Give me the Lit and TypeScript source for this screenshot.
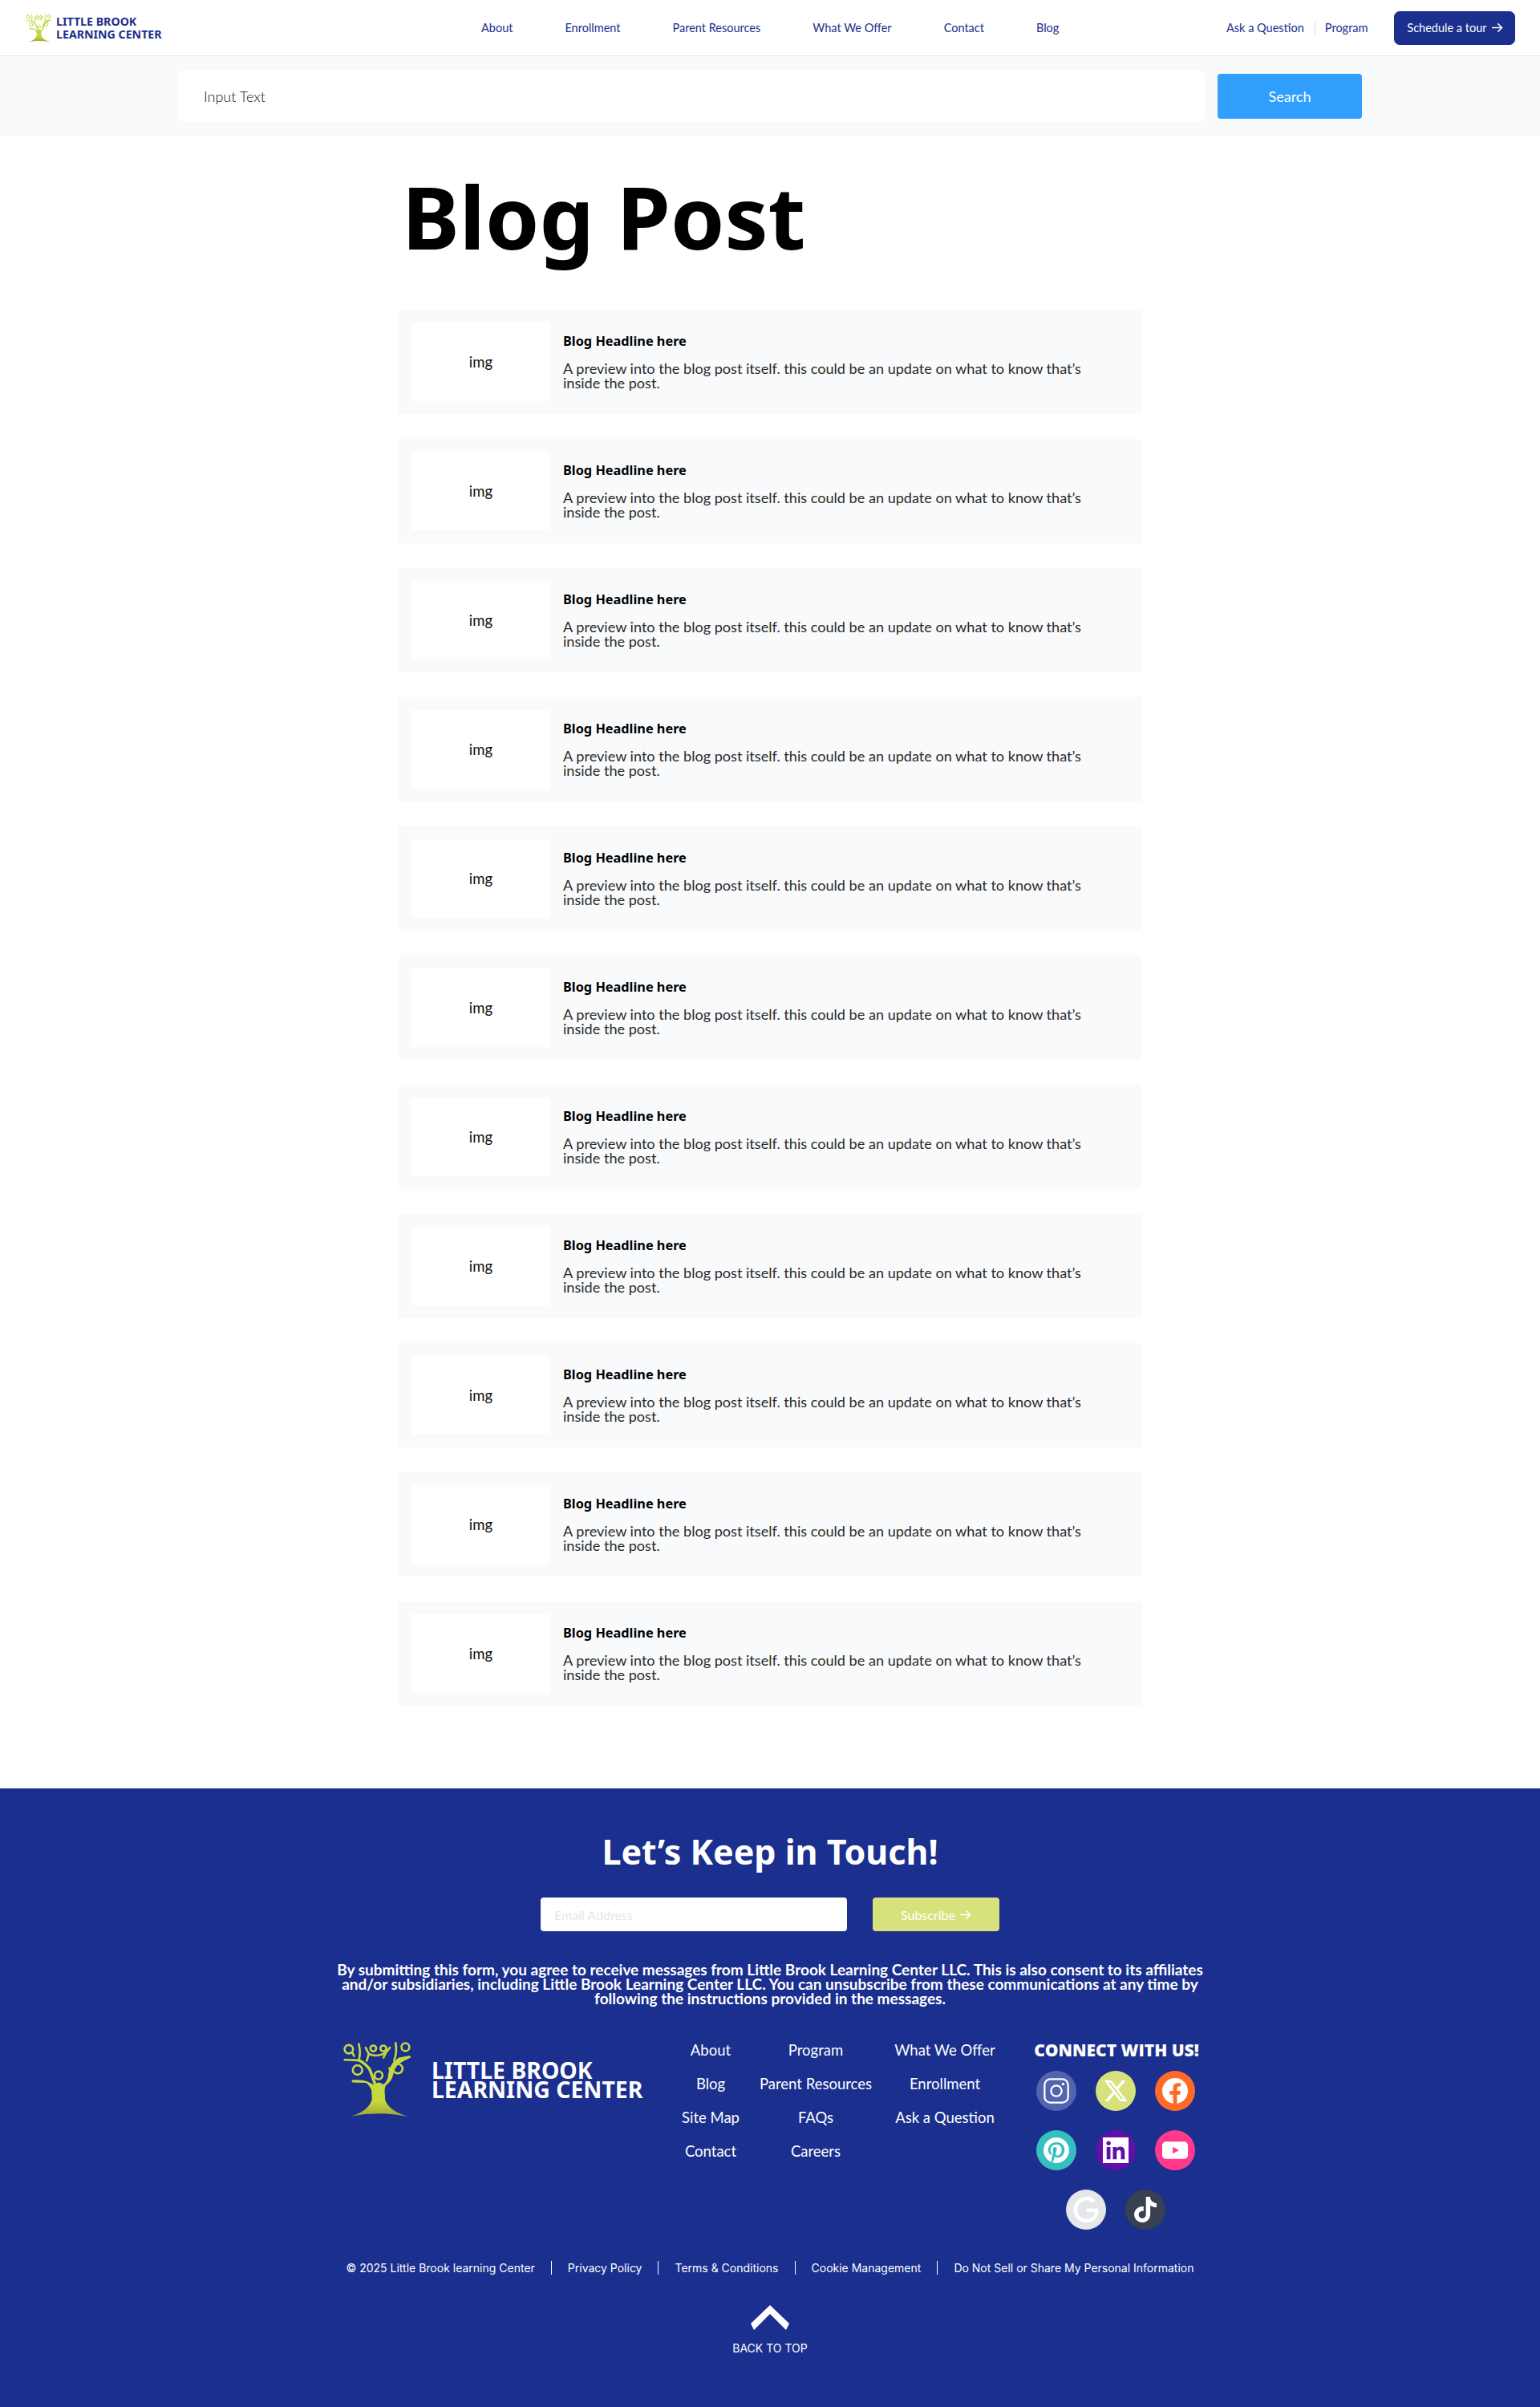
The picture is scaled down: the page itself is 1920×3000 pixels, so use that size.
import { LitElement, html, css, svg } from "lit";
import { customElement } from "lit/decorators.js";

const tree = () => html`<svg class="tree" viewBox="48 46 262 292" aria-hidden="true">
  <defs><linearGradient id="tg" x1="0" y1="0" x2="0" y2="1"><stop offset="0.75" stop-color="#c4d93e"/><stop offset="1" stop-color="#a3a336"/></linearGradient></defs>
  <path fill="url(#tg)" d="M82 332Q148 312 160 268L158 232Q150 216 138 206L86 204 82 195Q128 192 150 204L170 214Q178 204 185 204Q194 204 204 212Q222 196 222 172Q226 148 240 128L262 110 304 102 308 110Q280 122 262 134Q244 150 240 176Q236 198 212 216L208 232L210 270Q222 312 298 334Q190 312 82 332Z"/>
  <g fill="none" stroke="#c4d93e" stroke-linecap="round" stroke-linejoin="round">
    <g stroke-width="11">
      <path d="M172 212Q160 175 150 152Q130 128 110 120"/>
    </g>
    <g stroke-width="8">
      <path d="M110 120L56 118"/>
      <path d="M110 122Q118 90 110 58"/>
      <path d="M92 104L86 92"/>
      <path d="M140 122L148 96Q180 110 212 92L228 72"/>
      <path d="M148 96L136 72"/>
      <path d="M212 92L204 110"/>
      <path d="M244 122Q256 90 250 54"/>
      <path d="M232 168L226 150"/>
    </g>
    <g stroke-width="8">
      <circle cx="72" cy="78" r="16"/><circle cx="165" cy="75" r="11"/><circle cx="203" cy="75" r="11"/>
      <circle cx="287" cy="70" r="15"/><circle cx="105" cy="157" r="18"/><circle cx="258" cy="152" r="18"/>
      <circle cx="185" cy="177" r="15"/>
    </g>
  </g>
</svg>`;

const arrow = () => html`<svg class="arrow" viewBox="0 0 16 14" aria-hidden="true"><path d="M1 7H14.5M9 1.5L14.5 7L9 12.5" fill="none" stroke="currentColor" stroke-width="1.6"/></svg>`;

const socials = [
  { c: "#5364ae", i: svg`<rect x="1" y="1" width="22" height="22" rx="5.4" fill="none" stroke="#fff" stroke-width="1.7"/><circle cx="12" cy="12" r="5" fill="none" stroke="#fff" stroke-width="1.7"/><circle cx="18.3" cy="5.7" r="1.3" fill="#fff"/>` },
  { c: "#d8e27d", i: svg`<path fill="#fff" d="M18.244 2.25h3.308l-7.227 8.26 8.502 11.24H16.17l-5.214-6.817L4.99 21.75H1.68l7.73-8.835L1.254 2.25H8.08l4.713 6.231zm-1.161 17.52h1.833L7.084 4.126H5.117z"/>` },
  { c: "#ff6b26", i: svg`<path fill="#fff" d="M24 12.073c0-6.627-5.373-12-12-12s-12 5.373-12 12c0 5.99 4.388 10.954 10.125 11.854v-8.385H7.078v-3.47h3.047V9.43c0-3.007 1.792-4.669 4.533-4.669 1.312 0 2.686.235 2.686.235v2.953H15.83c-1.491 0-1.956.925-1.956 1.874v2.25h3.328l-.532 3.47h-2.796v8.385C19.612 23.027 24 18.062 24 12.073z"/>` },
  { c: "#36bfbf", i: svg`<path fill="#fff" d="M12.017 0C5.396 0 .029 5.367.029 11.987c0 5.079 3.158 9.417 7.618 11.162-.105-.949-.199-2.403.041-3.439.219-.937 1.406-5.957 1.406-5.957s-.359-.72-.359-1.781c0-1.663.967-2.911 2.168-2.911 1.024 0 1.518.769 1.518 1.688 0 1.029-.653 2.567-.992 3.992-.285 1.193.6 2.165 1.775 2.165 2.128 0 3.768-2.245 3.768-5.487 0-2.861-2.063-4.869-5.008-4.869-3.41 0-5.409 2.562-5.409 5.199 0 1.033.394 2.143.889 2.741.099.12.112.225.085.345-.09.375-.293 1.199-.334 1.363-.053.225-.172.271-.401.165-1.495-.69-2.433-2.878-2.433-4.646 0-3.776 2.748-7.252 7.92-7.252 4.158 0 7.392 2.967 7.392 6.923 0 4.135-2.607 7.462-6.233 7.462-1.214 0-2.354-.629-2.758-1.379l-.749 2.848c-.269 1.045-1.004 2.352-1.498 3.146 1.123.345 2.306.535 3.55.535 6.607 0 11.985-5.365 11.985-11.987C23.97 5.39 18.592.026 11.985.026L12.017 0z"/>` },
  { c: "#600fa8", i: svg`<path fill="#fff" fill-rule="evenodd" d="M0 0H24V24H0ZM20.447 20.452h-3.554v-5.569c0-1.328-.027-3.037-1.852-3.037-1.853 0-2.136 1.445-2.136 2.939v5.667H9.351V9h3.414v1.561h.046c.477-.9 1.637-1.85 3.37-1.85 3.601 0 4.267 2.37 4.267 5.455v6.286zM5.337 7.433c-1.144 0-2.063-.926-2.063-2.065 0-1.138.92-2.063 2.063-2.063 1.14 0 2.064.925 2.064 2.063 0 1.139-.925 2.065-2.064 2.065zm1.782 13.019H3.555V9h3.564v11.452z"/>` },
  { c: "#ff3a8c", i: svg`<rect x="0" y="4" width="24" height="16" rx="3.4" fill="#fff"/><path d="M9.8 8.8v6.4l6-3.2z" fill="#ff3a8c"/>` },
  { c: "#e5e7eb", i: svg`<path fill="#fff" d="M12.48 10.92v3.28h7.84c-.24 1.84-.853 3.187-1.787 4.133-1.147 1.147-2.933 2.4-6.053 2.4-4.827 0-8.6-3.893-8.6-8.72s3.773-8.72 8.6-8.72c2.6 0 4.507 1.027 5.907 2.347l2.307-2.307C18.747 1.44 16.133 0 12.48 0 5.867 0 .307 5.387.307 12s5.56 12 12.173 12c3.573 0 6.267-1.173 8.373-3.36 2.16-2.16 2.84-5.213 2.84-7.667 0-.76-.053-1.467-.173-2.053H12.48z"/>` },
  { c: "#374151", i: svg`<path fill="#fff" d="M12.525.02c1.31-.02 2.61-.01 3.91-.02.08 1.53.63 3.09 1.75 4.17 1.12 1.11 2.7 1.62 4.24 1.79v4.03c-1.44-.05-2.89-.35-4.2-.97-.57-.26-1.1-.59-1.62-.93-.01 2.92.01 5.84-.02 8.75-.08 1.4-.54 2.79-1.35 3.94-1.31 1.92-3.58 3.17-5.91 3.21-1.43.08-2.86-.31-4.08-1.03-2.02-1.19-3.44-3.37-3.65-5.71-.02-.5-.03-1-.01-1.49.18-1.9 1.12-3.72 2.58-4.96 1.66-1.44 3.98-2.13 6.15-1.72.02 1.48-.04 2.96-.04 4.44-.99-.32-2.15-.23-3.02.37-.63.41-1.11 1.04-1.36 1.75-.21.51-.15 1.07-.14 1.61.24 1.64 1.82 3.02 3.5 2.87 1.12-.01 2.19-.66 2.77-1.61.19-.33.4-.67.41-1.06.1-1.79.06-3.57.07-5.36.01-4.03-.01-8.05.02-12.07z"/>` },
];

const nav = ["About", "Enrollment", "Parent Resources", "What We Offer", "Contact", "Blog"];
const footerLinks = ["About", "Program", "What We Offer", "Blog", "Parent Resources", "Enrollment", "Site Map", "FAQs", "Ask a Question", "Contact", "Careers", ""];
const legal = ["© 2025 Little Brook learning Center", "Privacy Policy", "Terms & Conditions", "Cookie Management", "Do Not Sell or Share My Personal Information"];

@customElement("app-root")
export class AppRoot extends LitElement {
  static styles = css`
    :host { display: block; width: 1920px; height: 3000px; background: #fff; font-family: "Lato", "Noto Sans", sans-serif; color: #111; overflow: hidden; }
    * { box-sizing: border-box; }
    a { color: inherit; text-decoration: none; }
    .page { display: flex; flex-direction: column; height: 3000px; }

    header { height: 70px; flex: none; display: flex; align-items: center; padding: 0 30px 0 32px; border-bottom: 1px solid #e5e7eb; color: #1b2f8e; font-size: 14.5px; }
    .brand { display: flex; align-items: center; gap: 6px; width: 568px; flex: none; }
    .brand .tree { width: 32px; height: 36px; }
    .brand b { font: 700 14.2px/15.5px "Noto Sans", sans-serif; color: #1b2f8e; white-space: nowrap; }
    nav.main { display: flex; gap: 65px; flex: none; width: 929px; }
    .aux { display: flex; align-items: center; flex: none; }
    .aux .sep { width: 1px; height: 16px; background: #d9dbe3; margin: 0 12px 0 13px; }
    .cta { display: flex; align-items: center; justify-content: center; gap: 5px; width: 151px; height: 42px; margin-left: 33px; background: #1b2f8e; color: #fff; border-radius: 7px; border: 1px solid #1b2f8e; flex: none; }
    .arrow { width: 15px; height: 13px; flex: none; }

    .search { height: 100px; flex: none; background: #f9fafb; display: flex; align-items: center; padding: 0 222px; gap: 16px; font-size: 18px; font-weight: 300; }
    .search .field { width: 1280px; height: 64px; background: #fff; border-radius: 8px; padding: 0 32px; display: flex; align-items: center; color: #111; }
    .search .btn { width: 180px; height: 56px; background: #319ffe; color: #fff; border-radius: 4px; display: flex; align-items: center; justify-content: center; font-weight: 400; }

    main { flex: 1; padding: 27px 497px 0; }
    h1 { margin: 0 0 43px 4px; font: 700 108px/146px "Noto Sans", sans-serif; color: #000; }
    .cards { display: flex; flex-direction: column; gap: 31px; }
    .card { height: 130px; background: #f9fafb; padding: 16px; display: flex; gap: 16px; }
    .img { width: 173px; height: 98px; background: #fff; display: flex; align-items: center; justify-content: center; font-size: 18.5px; flex: none; color: #111; }
    .body { padding-top: 12px; width: 665px; }
    .body h3 { margin: 0 0 14px; font: 700 16.3px/22px "Noto Sans", sans-serif; color: #000; }
    .body p { margin: 0; font-size: 18.1px; font-weight: 400; line-height: 18px; color: #2a2a2a; }

    footer { height: 771px; flex: none; background: #1b2f8e; color: #fff; display: flex; flex-direction: column; align-items: center; padding-top: 50px; }
    footer h2 { margin: 0 0 27px; font: 700 43px/58px "Noto Sans", sans-serif; }
    .sub { display: flex; align-items: center; gap: 32px; height: 44px; margin-bottom: 38px; }
    .email { width: 382px; height: 42px; background: #fff; border-radius: 4px; padding: 0 17px; display: flex; align-items: center; color: #e5e7eb; font-size: 16px; }
    .subbtn { width: 158px; height: 42px; background: #d8e27d; border-radius: 4px; display: flex; align-items: center; justify-content: center; gap: 5px; font-size: 16px; color: #fff; }
    .disc { width: 1100px; margin: 0 0 36px; text-align: center; font-size: 19px; font-weight: 700; line-height: 18px; }
    .cols { width: 1078px; display: flex; align-items: flex-start; }
    .fbrand { display: flex; align-items: center; gap: 25px; width: 385px; margin-left: 6px; flex: none; padding-top: 7px; }
    .fbrand .tree { width: 86px; height: 97px; flex: none; }
    .fbrand b { font: 700 28.4px/24px "Noto Sans", sans-serif; white-space: nowrap; }
    .links { display: grid; grid-template-columns: 130px 132px 190px; grid-auto-rows: 42px; width: 452px; flex: none; margin-left: 9px; font-size: 18.5px; padding-top: 7px; }
    .links a { display: flex; justify-content: center; line-height: 24px; height: 24px; white-space: nowrap; }
    .connect { width: 206px; margin-left: 16px; flex: none; padding-top: 4px; }
    .connect h4 { margin: 0 0 11px; font: 800 21px/30px "Open Sans", sans-serif; white-space: nowrap; text-align: center; }
    .soc { display: flex; flex-wrap: wrap; justify-content: center; gap: 24px; padding: 0 5px; margin-left: -2px; }
    .soc span { width: 50px; height: 50px; border-radius: 50%; display: flex; align-items: center; justify-content: center; }
    .soc svg { width: 32px; height: 32px; }
    .legal { display: flex; align-items: center; margin-top: 39px; font: 400 14px/17px "Inter", sans-serif; }
    .legal span + span { border-left: 1px solid #fff; margin-left: 20px; padding-left: 20px; }
    .top { margin-top: 38px; display: flex; flex-direction: column; align-items: center; gap: 14px; font: 400 14px/17px "Inter", sans-serif; }
    .top svg { width: 48px; height: 31px; }
  `;

  render() {
    return html`<div class="page">
      <header>
        <a class="brand">${tree()}<b>LITTLE BROOK<br />LEARNING CENTER</b></a>
        <nav class="main">${nav.map((n) => html`<a>${n}</a>`)}</nav>
        <div class="aux"><a>Ask a Question</a><i class="sep"></i><a>Program</a></div>
        <a class="cta">Schedule a tour ${arrow()}</a>
      </header>
      <section class="search">
        <div class="field">Input Text</div>
        <div class="btn">Search</div>
      </section>
      <main>
        <h1>Blog Post</h1>
        <div class="cards">
          ${Array.from({ length: 11 }).map(() => html`<article class="card">
            <div class="img">img</div>
            <div class="body">
              <h3>Blog Headline here</h3>
              <p>A preview into the blog post itself. this could be an update on what to know that’s inside the post.</p>
            </div>
          </article>`)}
        </div>
      </main>
      <footer>
        <h2>Let’s Keep in Touch!</h2>
        <div class="sub">
          <div class="email">Email Address</div>
          <div class="subbtn">Subscribe ${arrow()}</div>
        </div>
        <p class="disc">By submitting this form, you agree to receive messages from Little Brook Learning Center LLC. This is also consent to its affiliates and/or subsidiaries, including Little Brook Learning Center LLC. You can unsubscribe from these communications at any time by following the instructions provided in the messages.</p>
        <div class="cols">
          <a class="fbrand">${tree()}<b>LITTLE BROOK<br />LEARNING CENTER</b></a>
          <div class="links">${footerLinks.map((l) => html`<a>${l}</a>`)}</div>
          <div class="connect">
            <h4>CONNECT WITH US!</h4>
            <div class="soc">${socials.map((s) => html`<span style="background:${s.c}"><svg viewBox="0 0 24 24">${s.i}</svg></span>`)}</div>
          </div>
        </div>
        <div class="legal">${legal.map((l) => html`<span>${l}</span>`)}</div>
        <a class="top">
          <svg viewBox="0 0 48 31"><path d="M0 23L24 0L48 23L44 31L24 11L4 31Z" fill="#fff"/></svg>
          BACK TO TOP
        </a>
      </footer>
    </div>`;
  }
}
